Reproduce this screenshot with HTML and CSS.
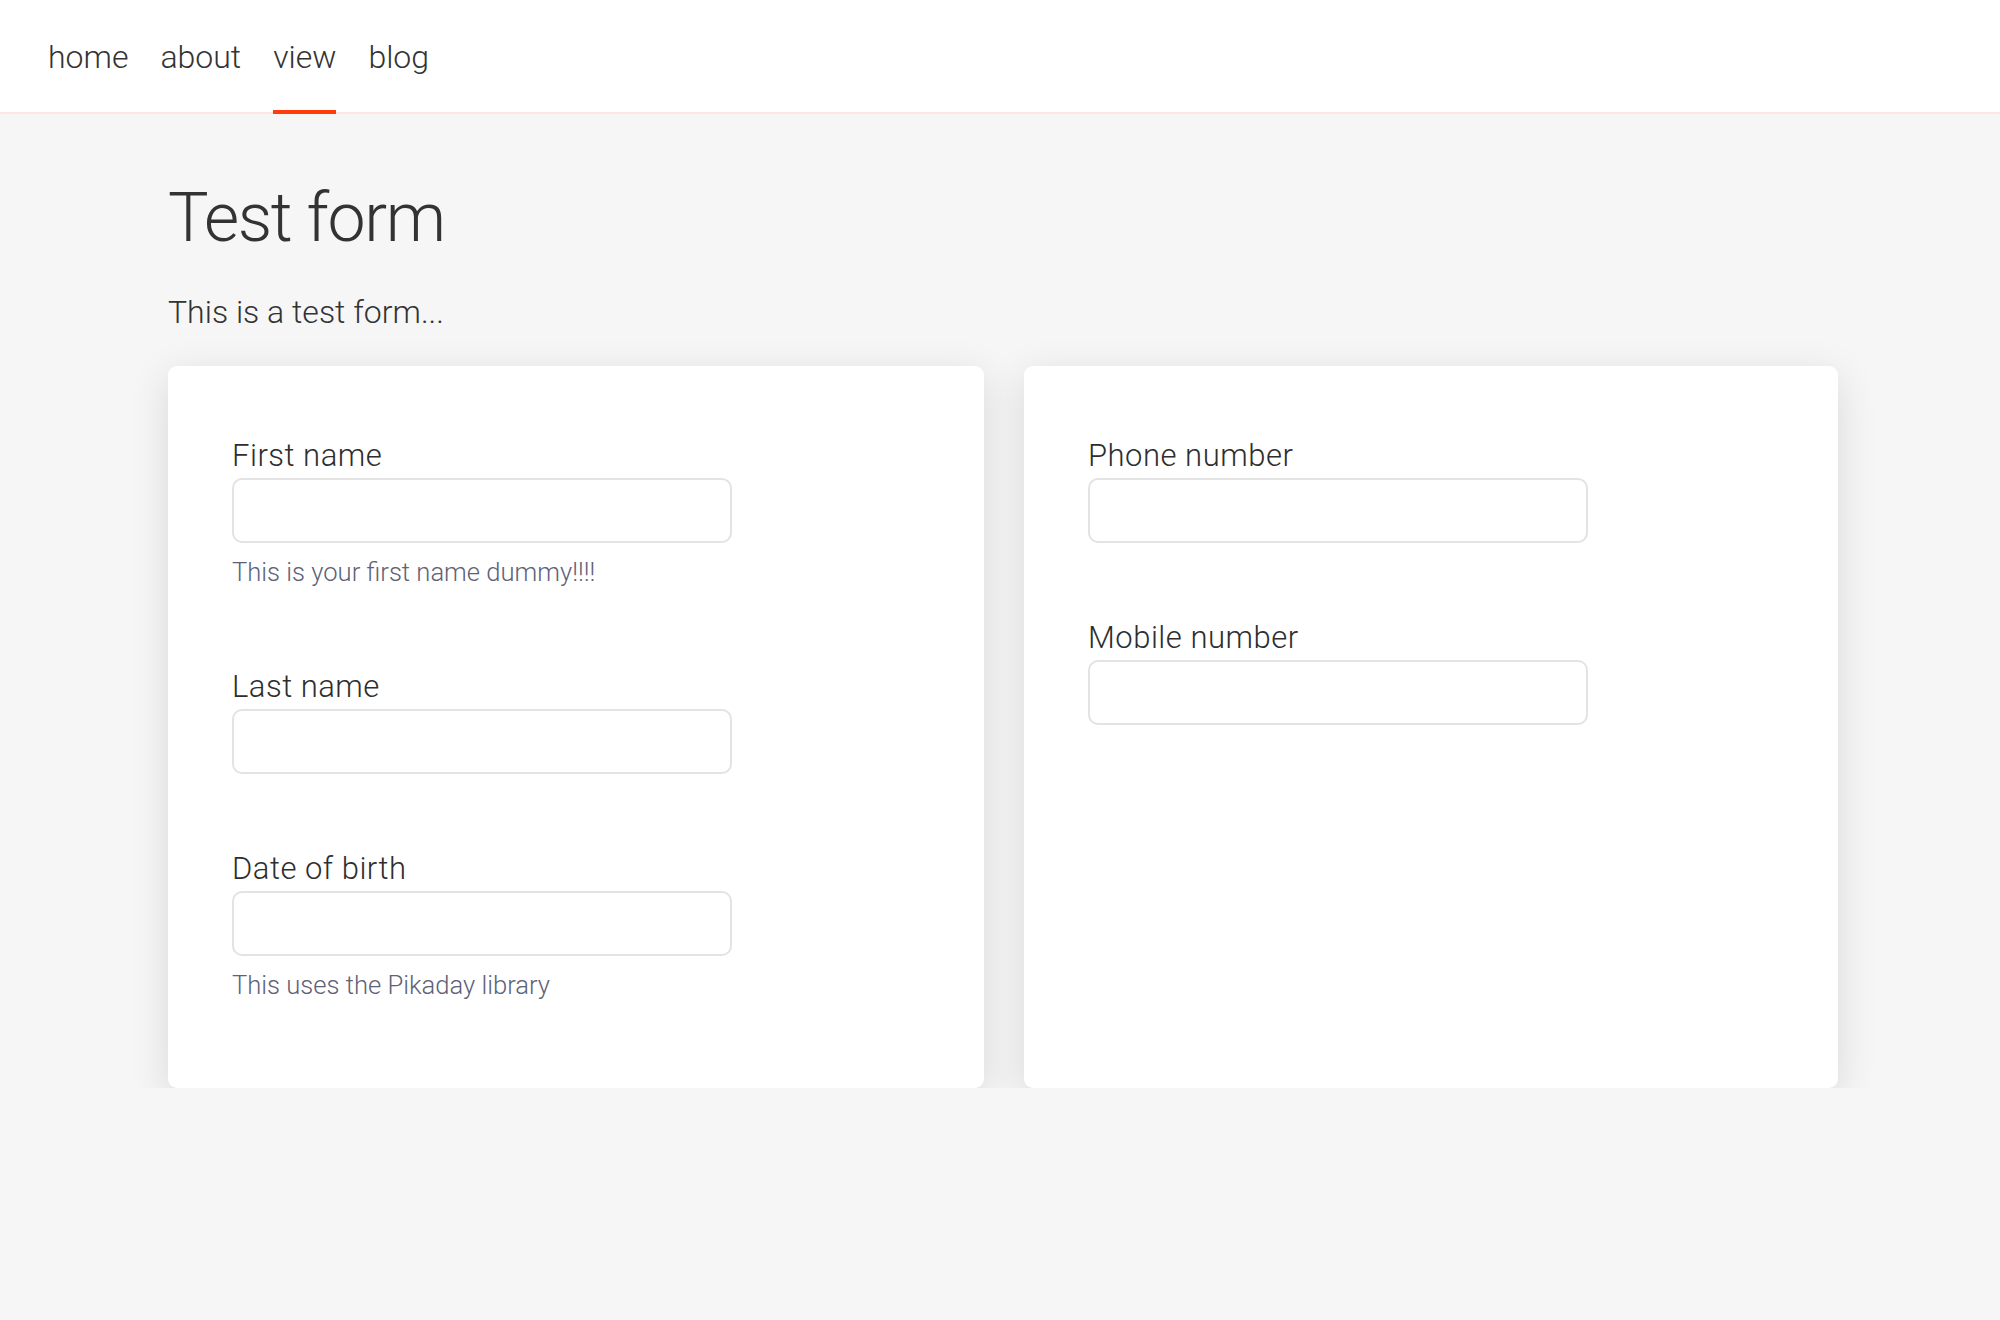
FILE: index.html
```html
<!DOCTYPE html>
<html lang="en">
<head>
<meta charset="utf-8">
<title>Test form</title>
<link rel="stylesheet" href="styles.css">
</head>
<body>
<nav class="topnav">
  <a class="navlink" href="#">home</a>
  <a class="navlink" href="#">about</a>
  <a class="navlink active" href="#">view</a>
  <a class="navlink" href="#">blog</a>
</nav>
<main class="page">
  <h1 class="title">Test form</h1>
  <p class="intro">This is a test form...</p>
  <div class="cards">
    <section class="card">
      <div class="field">
        <label class="label">First name</label>
        <input class="input" type="text">
        <div class="help">This is your first name dummy!!!!</div>
      </div>
      <div class="field">
        <label class="label">Last name</label>
        <input class="input" type="text">
      </div>
      <div class="field">
        <label class="label">Date of birth</label>
        <input class="input" type="text">
        <div class="help">This uses the Pikaday library</div>
      </div>
    </section>
    <section class="card">
      <div class="field">
        <label class="label">Phone number</label>
        <input class="input" type="text">
      </div>
      <div class="field">
        <label class="label">Mobile number</label>
        <input class="input" type="text">
      </div>
    </section>
  </div>
</main>
</body>
</html>
```
FILE: styles.css
```css
* { box-sizing: border-box; }
html, body { margin: 0; padding: 0; }
body {
  background: #f6f6f6;
  font-family: Roboto, "Liberation Sans", sans-serif;
  font-weight: 300;
  color: #333333;
}
.topnav {
  display: flex;
  gap: 32px;
  padding-left: 48px;
  height: 114px;
  background: #ffffff;
  border-bottom: 2px solid #fde8e1;
}
.navlink {
  display: block;
  font-size: 32px;
  line-height: 48px;
  padding-top: 33px;
  padding-bottom: 29px;
  height: 114px;
  margin-bottom: -2px;
  border-bottom: 4px solid transparent;
  color: #333333;
  text-decoration: none;
}
.navlink.active { border-bottom-color: #ff3d0a; }
.page {
  width: 1670px;
  margin-left: 168px;
}
.title {
  margin: 63px 0 0;
  font-size: 68px;
  line-height: 82px;
  letter-spacing: -1.4px;
  font-weight: 300;
  color: #333333;
}
.intro {
  margin: 29px 0 0;
  font-size: 32px;
  line-height: 48px;
}
.cards {
  margin-top: 30px;
  display: grid;
  grid-template-columns: 816px 814px;
  gap: 40px;
}
.card {
  background: #ffffff;
  border-radius: 9px;
  box-shadow: 0 10px 40px rgba(0, 0, 0, 0.12);
  padding: 67px 64px 83px;
}
.field { margin-bottom: 72px; }
.field:last-child { margin-bottom: 0; }
.label {
  display: block;
  font-size: 31px;
  line-height: 45px;
  letter-spacing: 0.5px;
  color: #2e2e2e;
}
.input {
  display: block;
  width: 500px;
  height: 65px;
  border: 2px solid #e3e3e3;
  border-radius: 10px;
  background: #ffffff;
  font-family: inherit;
  font-size: 28px;
  padding: 0 16px;
  outline: none;
}
.help {
  margin-top: 10px;
  font-size: 25.6px;
  line-height: 39px;
  color: #5e6177;
}
```
